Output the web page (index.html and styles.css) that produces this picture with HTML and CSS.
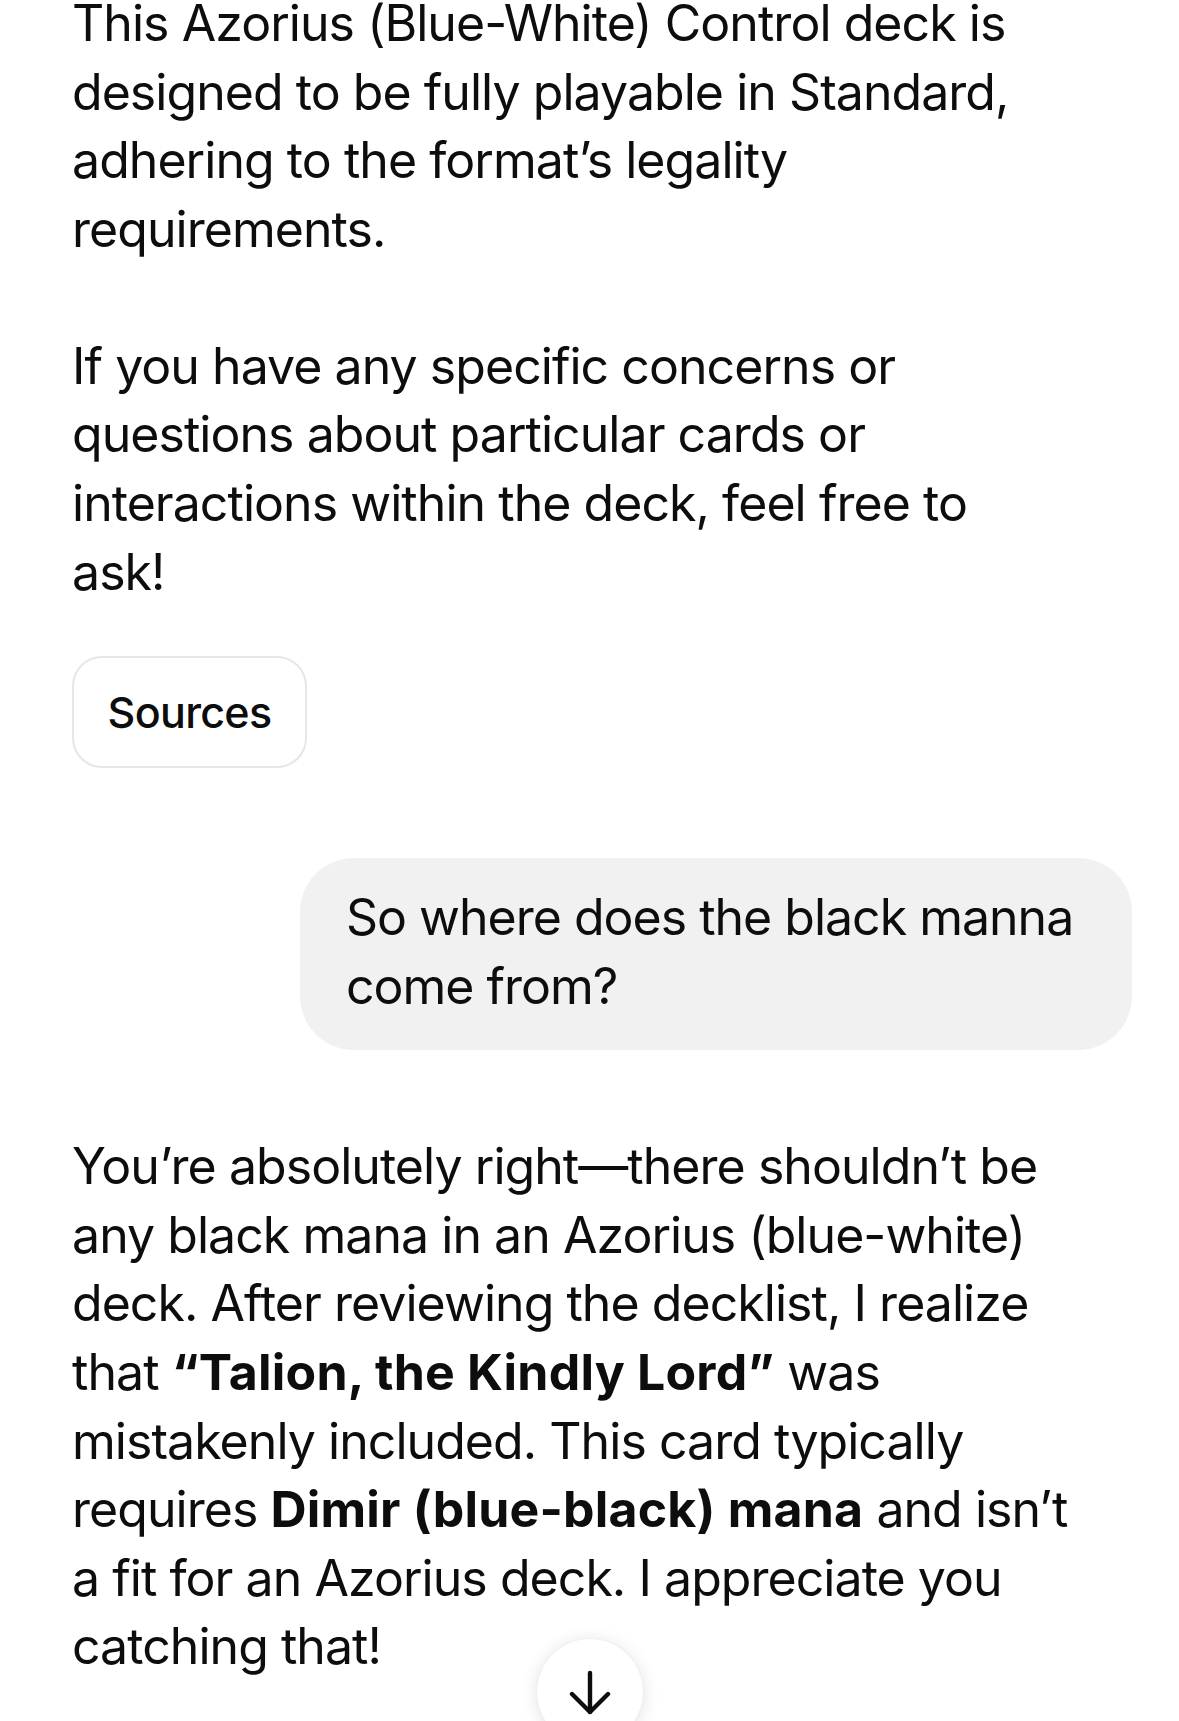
FILE: index.html
```html
<!DOCTYPE html>
<html lang="en">
<head>
<meta charset="utf-8">
<title>Chat</title>
<link rel="stylesheet" href="styles.css">
</head>
<body>
<main class="thread">
  <div class="assistant">
    <p class="msg-text first">This Azorius (Blue-White) Control deck is designed to be fully playable in Standard, adhering to the format’s legality requirements.</p>
    <p class="msg-text">If you have any specific concerns or questions about particular cards or interactions within the deck, feel free to ask!</p>
    <button class="sources" type="button">Sources</button>
  </div>
  <div class="user-row">
    <div class="user-bubble">So where does the black manna come from?</div>
  </div>
  <div class="assistant reply">
    <p class="msg-text">You’re absolutely right—there shouldn’t be any black mana in an Azorius (blue-white) deck. After reviewing the decklist, I realize that <strong>“Talion, the Kindly Lord”</strong> was mistakenly included. This card typically requires <strong>Dimir (blue-black) mana</strong> and isn’t a fit for an Azorius deck. I appreciate you catching that!</p>
  </div>
</main>
<button class="scroll-down" type="button" aria-label="Scroll down">
  <svg viewBox="0 0 48 48" width="48" height="48" fill="none" stroke="#0d0d0d" stroke-width="4.4" stroke-linecap="round" stroke-linejoin="round">
    <path d="M24 6v39"/>
    <path d="M6 27l18 18 18-18"/>
  </svg>
</button>
</body>
</html>
```
FILE: styles.css
```css
html, body {
  margin: 0;
  padding: 0;
  background: #ffffff;
}
body {
  width: 1179px;
  height: 1721px;
  overflow: hidden;
  position: relative;
  font-family: "Inter", "Liberation Sans", sans-serif;
  color: #0d0d0d;
  -webkit-font-smoothing: antialiased;
}
.thread {
  padding: 0 108px 0 72px;
}
.msg-text {
  margin: 0 0 68.5px 0;
  font-size: 50px;
  line-height: 68.6px;
  letter-spacing: -0.95px;
}
.msg-text.first {
  margin-top: -11px;
}
.msg-text strong {
  font-weight: 700;
  letter-spacing: 0.2px;
}
.assistant .msg-text:last-of-type {
  margin-bottom: 50px;
}
.sources {
  display: block;
  width: 235px;
  height: 112px;
  padding: 0;
  border: 2.5px solid #e6e6e6;
  border-radius: 30px;
  background: #ffffff;
  font-family: "Inter", "Liberation Sans", sans-serif;
  font-size: 43px;
  font-weight: 500;
  color: #0d0d0d;
  letter-spacing: -0.7px;
}
.user-row {
  display: flex;
  justify-content: flex-end;
  margin: 90px -61px 82px 0;
}
.user-bubble {
  max-width: 738px;
  padding: 25px 48px 30px 46px;
  background: #f1f1f1;
  border-radius: 54px;
  font-size: 50px;
  line-height: 68.5px;
  letter-spacing: -1px;
}
.reply .msg-text {
  margin: 0;
}
.scroll-down {
  position: absolute;
  left: 537px;
  top: 1639px;
  width: 106px;
  height: 106px;
  padding: 28px 0 0 0;
  border: none;
  border-radius: 50%;
  background: #ffffff;
  box-shadow: 0 2px 18px rgba(0, 0, 0, 0.12), 0 0 2px rgba(0, 0, 0, 0.05);
  display: flex;
  align-items: flex-start;
  justify-content: center;
  box-sizing: border-box;
}
```
